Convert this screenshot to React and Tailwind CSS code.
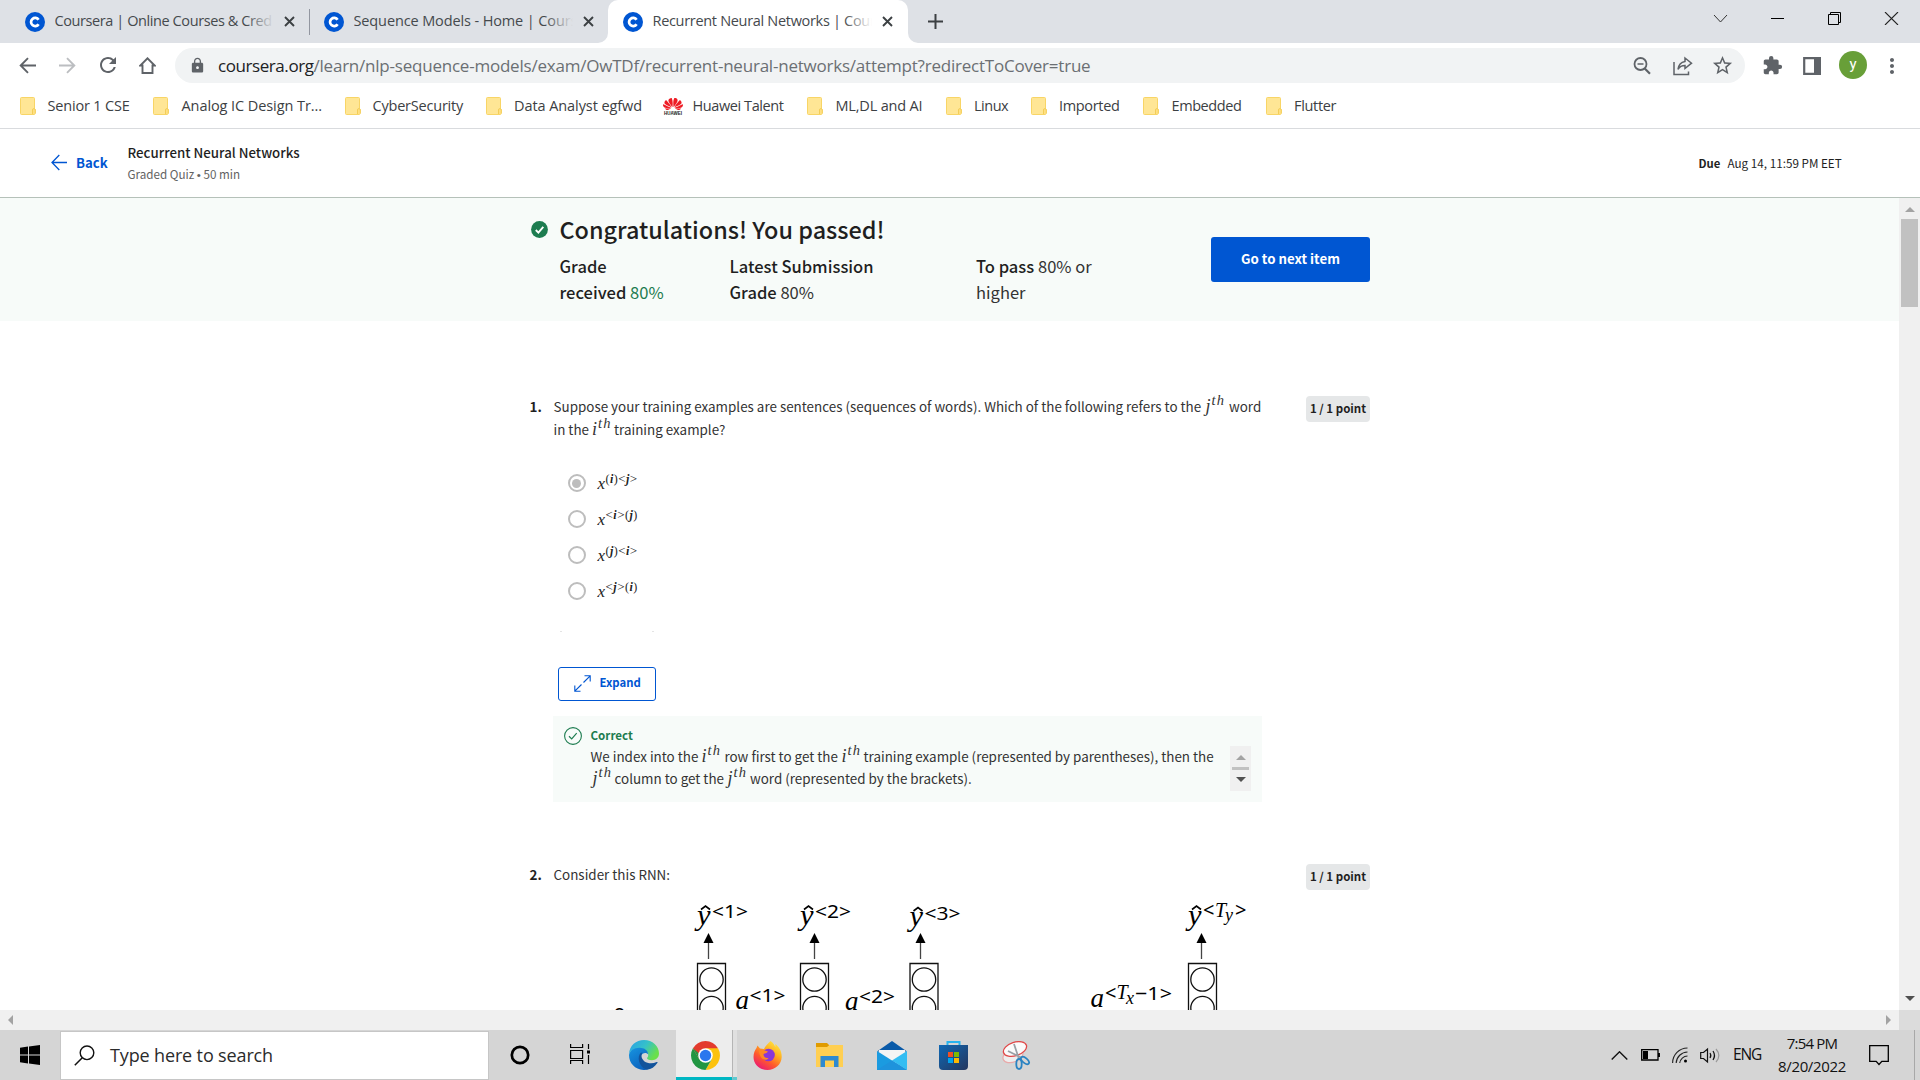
import { MdExtension, MdLock, MdMoreVert, MdRefresh, MdStarOutline } from "react-icons/md";
import { SiHuawei } from "react-icons/si";

function Favicon() {
  return (
    <svg className="size-5 shrink-0" viewBox="0 0 20 20">
      <circle cx="10" cy="10" r="10" fill="#0056d2" />
      <path d="M13.6 12.2a4.1 4.1 0 1 1 0-4.4" fill="none" stroke="#fff" strokeWidth="2.7" />
    </svg>
  );
}

function TabClose() {
  return (
    <svg className="size-[11px] shrink-0" viewBox="0 0 11 11">
      <path d="M1 1l9 9M10 1l-9 9" stroke="#3c4043" strokeWidth="1.9" />
    </svg>
  );
}

function TabBody({ title, fade, tracking }) {
  return (
    <>
      <Favicon />
      <div className="relative mr-[10px] mb-[2px] ml-[9.5px] w-[219px] overflow-hidden">
        <span className={"block whitespace-nowrap text-[14.5px] leading-5 text-[#45494d] " + tracking}>{title}</span>
        <span className={"absolute inset-y-0 right-0 w-7 bg-linear-to-r from-transparent " + fade} />
      </div>
      <TabClose />
    </>
  );
}

function TabStrip() {
  return (
    <div className="flex h-[43px] items-center bg-[#dee1e6]">
      <div className="flex h-full w-[309px] items-center pl-[25px]">
        <TabBody title="Coursera | Online Courses & Cred" fade="to-[#dee1e6]" tracking="tracking-[-0.41px]" />
      </div>
      <div className="h-[26px] w-px bg-[#9296a0]" />
      <div className="flex h-full w-[298px] items-center pl-[14px]">
        <TabBody title="Sequence Models - Home | Cours" fade="to-[#dee1e6]" tracking="tracking-[-0.12px]" />
      </div>
      <div className="relative flex h-full w-[299.5px] items-center rounded-t-[10px] bg-white pl-[15px]">
        <TabBody title="Recurrent Neural Networks | Cour" fade="to-white" tracking="tracking-[-0.31px]" />
        <svg className="absolute bottom-0 -left-[10px] size-[10px]" viewBox="0 0 10 10"><path d="M10 0v10H0A10 10 0 0 0 10 0z" fill="#fff" /></svg>
        <svg className="absolute bottom-0 -right-[10px] size-[10px]" viewBox="0 0 10 10"><path d="M0 0v10h10A10 10 0 0 1 0 0z" fill="#fff" /></svg>
      </div>
      <svg className="ml-5 size-[15px]" viewBox="0 0 15 15"><path d="M7.5 0v15M0 7.5h15" stroke="#3c4043" strokeWidth="2" /></svg>
      <div className="ml-auto flex items-start gap-[42px] self-start pt-3 pr-[21px]">
        <svg className="mt-[2px] h-[9px] w-[15px]" viewBox="0 0 15 9"><path d="M1 1l6.5 7L14 1" fill="none" stroke="#333" strokeWidth="1" /></svg>
        <svg className="h-[13px] w-[15px]" viewBox="0 0 15 13"><path d="M1 6.5h13" stroke="#000" strokeWidth="1" /></svg>
        <svg className="h-[13px] w-[15px]" viewBox="0 0 15 13"><path d="M1.5 2.500h10v10h-10zM3.5 2.500V.5h10v10h-2" fill="none" stroke="#000" strokeWidth="1" /></svg>
        <svg className="h-[13px] w-[15px]" viewBox="0 0 15 13"><path d="M1 0l13 13M14 0L1 13" stroke="#222" strokeWidth="1.1" /></svg>
      </div>
    </div>
  );
}

function AddressBar() {
  return (
    <div className="flex h-[45px] items-start pt-[5px]">
      <div className="flex h-[34px] w-[175px] items-center pl-[19px]">
        <svg className="size-[17px]" viewBox="0 0 17 17"><path d="M17 8.500H2M9 1.200L1.700 8.500 9 15.800" fill="none" stroke="#5f6368" strokeWidth="1.9" /></svg>
        <svg className="ml-[23px] size-[17px]" viewBox="0 0 17 17"><path d="M0 8.500h15M8 1.200l7.300 7.300L8 15.800" fill="none" stroke="#bcbec1" strokeWidth="1.9" /></svg>
        <MdRefresh className="ml-5 size-[24px] text-[#5f6368]" />
        <svg className="ml-[19px] h-[17px] w-[17px]" viewBox="0 0 17 17"><path d="M3.500 16V8.500H1.300L8.500 1.300l7.200 7.200h-2.200V16z" fill="none" stroke="#5f6368" strokeWidth="1.9" /></svg>
      </div>
      <div className="flex h-[35px] w-[1570px] items-center rounded-full bg-[#f1f3f4] pl-[14px] text-[#6b6f73]">
        <MdLock className="size-[17px] text-[#5f6368]" />
        <span className="ml-3 w-[1100px] whitespace-nowrap text-[17px] leading-6 tracking-[-0.22px]">
          <span className="tracking-[-0.43px] text-[#202124]">coursera.org</span>/learn/nlp-sequence-models/exam/OwTDf/recurrent-neural-networks/attempt?redirectToCover=true
        </span>
        <svg className="ml-auto size-[18px]" viewBox="0 0 18 18"><circle cx="7.5" cy="7" r="6" fill="none" stroke="#5f6368" strokeWidth="1.8" /><path d="M4.500 7h6" stroke="#5f6368" strokeWidth="1.5" /><path d="M11.700 11.500l5.300 5.300" stroke="#5f6368" strokeWidth="2.2" /></svg>
        <svg className="ml-[22px] size-[20px]" viewBox="0 0 20 20"><path d="M1 6v12.500h14.500V15.500M12 2l6.500 5.200L12 12.500V9.500c-3.500 0-5.500 1.300-7 3.800.5-4 3-7 7-7.800z" fill="none" stroke="#5f6368" strokeWidth="1.5" /></svg>
        <MdStarOutline className="mr-[11px] ml-[18px] size-[23px] text-[#5f6368]" />
      </div>
      <div className="flex h-[35px] items-center">
        <MdExtension className="ml-[17px] size-[21px] text-[#5f6368]" />
        <svg className="ml-[20px] h-[18px] w-[18px]" viewBox="0 0 18 18"><path d="M1.200 1.200h15.600v15.600H1.200z" fill="none" stroke="#5f6368" strokeWidth="2.2" /><path d="M11 0h7v18h-7z" fill="#5f6368" /></svg>
        <span className="mb-px ml-[18px] flex size-7 items-center justify-center rounded-full bg-[#689f38] pb-[2px] font-['Roboto',sans-serif] text-[15px] leading-none text-white">y</span>
        <MdMoreVert className="ml-[13px] size-[24px] text-[#5f6368]" />
      </div>
    </div>
  );
}

function Folder() {
  return (
    <svg className="h-[18px] w-4 shrink-0" viewBox="0 0 16 18">
      <path d="M1.500.5h12a1 1 0 0 1 1 1V12h.5v4.500a1 1 0 0 1-1 1H1.500a1 1 0 0 1-1-1v-15a1 1 0 0 1 1-1z" fill="#ffe695" stroke="#f8d566" />
      <path d="M12.500 17v-4a1.400 1.400 0 0 1 2.800 0v3.500" fill="#ffe082" stroke="#f3cd57" />
    </svg>
  );
}

function Huawei() {
  return (
    <span className="flex w-5 shrink-0 flex-col items-center">
      <SiHuawei className="h-[16px] w-5 text-[#ee1c25]" preserveAspectRatio="none" />
      <span className="font-['Liberation_Sans',sans-serif] text-[4.5px] leading-[4px] font-bold text-[#222]">HUAWEI</span>
    </span>
  );
}

const bookmarks = [
  ["Senior 1 CSE", "w-[133px]", "tracking-[-0.17px]", "gap-[11.5px]"],
  ["Analog IC Design Tr...", "w-[192px]", "tracking-[-0.08px]", "gap-[12.5px]"],
  ["CyberSecurity", "w-[141px]", "tracking-[-0.21px]", "gap-[11.5px]"],
  ["Data Analyst egfwd", "w-[177px]", "tracking-[-0.08px]", "gap-[12px]"],
  ["Huawei Talent", "w-[144px]", "tracking-[-0.41px]", "gap-[9.5px]"],
  ["ML,DL and AI", "w-[139px]", "tracking-[-0.17px]", "gap-[12.5px]"],
  ["Linux", "w-[85px]", "tracking-[-0.48px]", "gap-[12px]"],
  ["Imported", "w-[112px]", "tracking-[-0.33px]", "gap-[12px]"],
  ["Embedded", "w-[123px]", "tracking-[-0.41px]", "gap-[12.5px]"],
  ["Flutter", "w-[90px]", "tracking-[-0.33px]", "gap-[12px]"],
];

function Bookmarks() {
  return (
    <div className="flex h-[41px] border-b border-[#d9dbde] pb-[5px] pl-5">
      {bookmarks.map(([name, width, tracking, gap]) => (
        <div key={name} className={"flex items-center " + width + " " + gap}>
          {name === "Huawei Talent" ? <Huawei /> : <Folder />}
          <span className={"whitespace-nowrap text-[14.5px] leading-5 text-[#3c4043] " + tracking}>{name}</span>
        </div>
      ))}
    </div>
  );
}

function QuizHeader() {
  return (
    <header className="flex h-[69px] items-start border-b border-[#b5c1b9] bg-white pl-[51px]">
      <svg className="mt-[25px] h-[17px] w-[16px]" viewBox="0 0 16 17"><path d="M16 8.500H1M8.300 1L1 8.500 8.300 16" fill="none" stroke="#0056d2" strokeWidth="1.3" /></svg>
      <span className="mt-[24px] ml-[9px] w-[51.5px] text-[13.2px] leading-5 font-bold text-[#0056d2]">Back</span>
      <div className="pt-[14px]">
        <div className="text-[13.3px] leading-[20px] font-medium whitespace-nowrap text-[#1f1f1f]">Recurrent Neural Networks</div>
        <div className="text-[11.65px] leading-[21px] whitespace-nowrap text-[#636363]">Graded Quiz <span className="font-['Liberation_Sans',sans-serif]">•</span> 50 min</div>
      </div>
      <div className="mt-[24px] ml-auto flex w-[221.5px] text-[11.3px] leading-5 whitespace-nowrap text-[#1f1f1f]">
        <span className="w-[29px] font-bold">Due</span>
        <span className="text-[11.7px]">Aug 14, 11:59 PM EET</span>
      </div>
    </header>
  );
}

function Banner() {
  return (
    <section className="flex h-[123px] items-start bg-[#f7fbf9] pl-[530.5px] text-[#1f1f1f]">
      <svg className="mt-[23px] size-[17px]" viewBox="0 0 17 17"><circle cx="8.5" cy="8.5" r="8.4" fill="#1d7c50" /><path d="M4.800 9l2.600 2.600 4.900-5.700" fill="none" stroke="#fff" strokeWidth="1.9" /></svg>
      <div className="ml-3 w-[651.5px] pt-[15px]">
        <h1 className="text-[23.4px] leading-[32px] font-medium">Congratulations! You passed!</h1>
        <div className="mt-[8px] flex text-[16.55px] leading-[26px] whitespace-nowrap">
          <p className="w-[170px]"><b className="font-medium">Grade<br />received</b> <span className="text-[#1d7c50]">80%</span></p>
          <p className="w-[246.5px]"><b className="font-medium">Latest Submission<br />Grade</b> <span className="text-[#333]">80%</span></p>
          <p className="text-[#333]"><b className="font-medium text-[#1f1f1f]">To pass</b> 80% or<br />higher</p>
        </div>
      </div>
      <button className="mt-[39px] h-[45px] w-[159px] rounded-[3px] bg-[#0056d2] pb-[2px] text-[13.25px] leading-5 font-bold text-white">Go to next item</button>
    </section>
  );
}

function Badge() {
  return <span className="ml-auto flex h-[26px] w-16 items-center justify-center self-start rounded-[4px] bg-[#e5e7e8] pb-[2px] text-[11.5px] leading-5 font-bold whitespace-nowrap text-[#1f1f1f]">1 / 1 point</span>;
}

/* Inline ordinal such as i^th, set in an italic serif. */
function Nth({ v, w }) {
  return (
    <span className={"inline-block font-['Liberation_Serif',serif] text-[18px] leading-none italic " + w}>
      {v}<sup className="relative -top-[7px] ml-px align-baseline text-[14.5px] leading-none tracking-[1.2px]">th</sup>
    </span>
  );
}

const options = [["(i)<j>", true], ["<i>(j)", false], ["(j)<i>", false], ["<j>(i)", false]];

function Sup({ s }) {
  return [...s].map((c, i) => (
    <span key={i} className={c === "i" || c === "j" ? "font-bold italic" : c === "<" || c === ">" ? "text-[13px]" : ""}>{c}</span>
  ));
}

function Options() {
  return (
    <div className="mt-[24px]">
      {options.map(([s, on]) => (
        <div key={s} className="flex h-9 items-center pl-[38.5px]">
          <span className="flex size-[18px] items-center justify-center rounded-full border-2 border-[#bdbdbd]">
            {on && <span className="size-[9px] rounded-full bg-[#bdbdbd]" />}
          </span>
          <span className="mt-px ml-3 font-['Liberation_Serif',serif] text-[17px] leading-none whitespace-nowrap text-[#222]">
            <i>x</i><sup className="relative -top-[6px] ml-[0.5px] align-baseline text-[12px] leading-none tracking-[0.45px]"><Sup s={s} /></sup>
          </span>
        </div>
      ))}
    </div>
  );
}

function Feedback() {
  return (
    <div className="mt-[15px] ml-6 flex h-[86px] w-[709px] bg-[#f7fbf9] pt-[8px] pl-[11px]">
      <svg className="mt-[3px] size-[18px]" viewBox="0 0 18 18"><circle cx="9" cy="9" r="8.4" fill="none" stroke="#1d7c50" strokeWidth="1.1" /><path d="M5 9.300l2.700 2.600 5-5.700" fill="none" stroke="#1d7c50" strokeWidth="1.2" /></svg>
      <div className="ml-[8.5px] w-[639.5px] text-[13.42px] leading-[22px] whitespace-nowrap text-[#333]">
        <div className="h-[21px] text-[11.6px] font-bold text-[#1d7c50]">Correct</div>
        <div className="flex h-[22px] items-baseline">
          <span className="w-[111px]">We index into the</span><Nth v="i" w="w-[23px]" />
          <span className="w-[117px]">row first to get the</span><Nth v="i" w="w-[22px]" />
          <span>training example (represented by parentheses), then the</span>
        </div>
        <div className="flex h-[22px] items-baseline">
          <span className="w-[2px]" /><Nth v="j" w="w-[22px]" />
          <span className="w-[113px]">column to get the</span><Nth v="j" w="w-[22.5px]" />
          <span>word (represented by the brackets).</span>
        </div>
      </div>
      <div className="mt-[22px] flex h-[45px] w-[21px] flex-col items-center bg-[#f0f0f0] pt-[9px]">
        <svg className="h-[5px] w-[10px]" viewBox="0 0 10 5"><path d="M5 0l5 5H0z" fill="#a3a3a3" /></svg>
        <span className="mt-[7px] h-[3px] w-[17px] bg-[#c1c1c1]" />
        <svg className="mt-[7px] h-[5px] w-[10px]" viewBox="0 0 10 5"><path d="M0 0h10L5 5z" fill="#505050" /></svg>
      </div>
    </div>
  );
}

/* One time step: predicted output, arrow and the stack of hidden units. */
function Cell({ box, arrow, label, labelY, sup }) {
  return (
    <g>
      <text x={label} y={labelY} fontSize="29" fontStyle="italic" textLength="13.5" lengthAdjust="spacingAndGlyphs">y</text>
      <path d={`M${label + 4} ${labelY - 15}l4.500-3.500 4.500 3.500`} fill="none" stroke="#000" strokeWidth="1.6" />
      {sup && <text x={label + 15} y={labelY - 6.5} className="font-['Noto_Sans',sans-serif]" fontSize="18.5" textLength="36" lengthAdjust="spacingAndGlyphs">{sup}</text>}
      <path d={`M${arrow} 57v16`} stroke="#444" strokeWidth="1.3" />
      <path d={`M${arrow} 47l5 10h-10z`} />
      <g fill="none" stroke="#111" strokeWidth="1.3">
        <path d={`M${box} 126V77.500h28V126`} />
        <circle cx={box + 14} cy="93.5" r="11.7" />
        <circle cx={box + 14} cy="122" r="11.7" />
      </g>
    </g>
  );
}

function Rnn() {
  const sans = "font-['Noto_Sans',sans-serif]";
  return (
    <svg className="block h-[124px] w-[720px] font-['Liberation_Serif',serif]" viewBox="0 0 720 124" fill="#000">
      <Cell box={143.5} arrow={154.5} label={143} labelY={38.5} sup="&lt;1&gt;" />
      <Cell box={246.5} arrow={260.5} label={246} labelY={38.5} sup="&lt;2&gt;" />
      <Cell box={356} arrow={366.5} label={355.5} labelY={40} sup="&lt;3&gt;" />
      <Cell box={634.5} arrow={647.5} label={634} labelY={38.5} />
      <text x="649" y="31" className={sans} fontSize="20">&lt;</text>
      <text x="661" y="30.5" fontSize="20" fontStyle="italic">T</text>
      <text x="671" y="35" fontSize="18" fontStyle="italic">y</text>
      <text x="681" y="31" className={sans} fontSize="20">&gt;</text>
      <text x="181.5" y="122.5" fontSize="27" fontStyle="italic">a</text>
      <text x="195.5" y="115.5" className={sans} fontSize="18.5" textLength="36" lengthAdjust="spacingAndGlyphs">&lt;1&gt;</text>
      <text x="291" y="124" fontSize="27" fontStyle="italic">a</text>
      <text x="305" y="117" className={sans} fontSize="18.5" textLength="36" lengthAdjust="spacingAndGlyphs">&lt;2&gt;</text>
      <text x="536.5" y="120.5" fontSize="27" fontStyle="italic">a</text>
      <text x="551" y="113.5" className={sans} fontSize="20">&lt;</text>
      <text x="562.5" y="113" fontSize="20" fontStyle="italic">T</text>
      <text x="572" y="118" fontSize="18" fontStyle="italic">x</text>
      <text x="581" y="113.5" className={sans} fontSize="18.5" textLength="37" lengthAdjust="spacingAndGlyphs">−1&gt;</text>
      <text x="47.5" y="135" className={sans} fontSize="18.5" textLength="36" lengthAdjust="spacingAndGlyphs">&lt;0&gt;</text>
    </svg>
  );
}

function Quiz() {
  return (
    <div className="w-[841px] text-[13.42px] leading-[23px] text-[#333]">
      <div className="mt-[74px] flex">
        <b className="w-[24.5px] pl-[0.5px] font-bold text-[#1f1f1f]">1.</b>
        <div className="whitespace-nowrap">
          <div className="flex h-[23px] items-baseline"><span className="w-[652px]">Suppose your training examples are sentences (sequences of words). Which of the following refers to the</span><Nth v="j" w="w-[23.5px]" /><span>word</span></div>
          <div className="flex h-[23px] items-baseline"><span className="w-[38.5px]">in the</span><Nth v="i" w="w-[22px]" /><span>training example?</span></div>
        </div>
        <span className="mt-px ml-auto flex"><Badge /></span>
      </div>
      <Options />
      <div className="mt-[22px] ml-[31px] flex h-px w-[94px] justify-between"><span className="w-[2px] bg-[#e4e4e4]" /><span className="w-[2px] bg-[#e4e4e4]" /></div>
      <button className="mt-[35px] ml-[29px] flex h-[34px] w-[98px] items-center rounded-[3px] border border-[#0056d2] pl-[15px]">
        <svg className="mb-px size-[17px]" viewBox="0 0 17 17"><path d="M10.500.8h5.700v5.700M16.200.8L9.500 7.500M6.500 16.200H.8v-5.700M.8 16.200l6.700-6.700" fill="none" stroke="#0056d2" strokeWidth="1.1" /></svg>
        <span className="mb-[4px] ml-[8.5px] text-[11.35px] leading-5 font-bold text-[#0056d2]">Expand</span>
      </button>
      <Feedback />
      <div className="mt-[61px] flex h-[23px]">
        <b className="w-[24.5px] pl-[0.5px] font-bold text-[#1f1f1f]">2.</b><span>Consider this RNN:</span>
        <span className="mt-px ml-auto flex"><Badge /></span>
      </div>
      <div className="pl-[25px]"><Rnn /></div>
    </div>
  );
}

function Search() {
  return (
    <div className="flex h-[49px] w-[429px] items-center border border-[#c6c6c6] bg-white pl-[13px]">
      <svg className="size-[21px]" viewBox="0 0 21 21"><circle cx="13" cy="7.8" r="6.8" fill="none" stroke="#111" strokeWidth="1.4" /><path d="M8.300 12.700L.8 20.200" stroke="#111" strokeWidth="1.5" /></svg>
      <span className="ml-[15px] text-[18px] leading-6 tracking-[-0.14px] text-[#2b2b2b]">Type here to search</span>
    </div>
  );
}

function Edge() {
  return (
    <svg className="size-[30px]" viewBox="0 0 30 30">
      <defs>
        <linearGradient id="e1" x1="0" y1="0" x2="1" y2=".5"><stop offset="0" stopColor="#2a9fe8" /><stop offset=".55" stopColor="#35c1c9" /><stop offset="1" stopColor="#6ae04a" /></linearGradient>
        <linearGradient id="e2" x1="0" y1="0" x2=".6" y2="1"><stop offset="0" stopColor="#1794e0" /><stop offset="1" stopColor="#0b62bd" /></linearGradient>
      </defs>
      <path d="M0 14C.5 5.500 7 0 15 0c8.500 0 15 6 15 13.500 0 4.500-3.500 6.700-7 6.700-3.500 0-5.200-1-5-2.200 1-1 1.200-2 1.200-3.200C19 11.500 15.500 8.500 11 8.500 5.500 8.500 1 11 0 14z" fill="url(#e1)" />
      <path d="M0 15c.5-4 5-7.200 10.500-7.200 5 0 8.600 2.800 8.700 6.700-1.700-2.500-6-2-7.500 2C10 22 14 28.500 20 29c-2 .8-4 1-5.500 1C6 29.500 0 23 0 15z" fill="url(#e2)" />
      <path d="M11.500 13C8 17 9.500 26 17 29.500c4.500.5 8.500-2 11.500-6.700.3-.6-.2-1-.8-.7C21 25 13 22.500 12.500 16c0-1.500.2-2.500 1-3.500z" fill="#12539b" />
    </svg>
  );
}

function Chrome() {
  return (
    <svg className="size-[29px]" viewBox="-14 -14 28 28">
      <path d="M0 0L-12.120-7A14 14 0 0 1 12.120-7z" fill="#e33b2e" />
      <path d="M0-7H12.120A14 14 0 0 1 0 14L6 3.500z" fill="#fcc20f" />
      <path d="M-12.120-7A14 14 0 0 0 0 14L6 3.500-6 3.500z" fill="#229642" />
      <path d="M-12.120-7L-6 3.500 0-7z" fill="#e33b2e" />
      <path d="M-12.120-7L-6 3.500-4 0z" fill="#229642" />
      <circle r="7" fill="#fff" /><circle r="5.5" fill="#2a77ee" />
    </svg>
  );
}

function Firefox() {
  return (
    <svg className="size-[29px]" viewBox="0 0 29 29">
      <defs><linearGradient id="f1" x1=".85" y1="0" x2=".2" y2="1"><stop offset="0" stopColor="#fff04a" /><stop offset=".35" stopColor="#ffb020" /><stop offset=".65" stopColor="#ff5a2c" /><stop offset="1" stopColor="#e8127c" /></linearGradient></defs>
      <path d="M17.500 0c3 2 4 4 4.700 6 .3-1 .3-2 0-3 3 2 6.500 6 6.500 13C28.500 23.500 22 29 14.500 29S.5 23.500.5 16c0-4 1.500-7 3-9l1-2.500L7 7.500c1.500 0 2.500.2 4 .5C12 5 15 3 17.500 0z" fill="url(#f1)" />
      <circle cx="15.5" cy="14" r="6.3" fill="#8a35d8" />
      <path d="M6 9.500c3-2 6 .5 9 1-1 1.800-3 1.800-4.500 2.500 0 3 2 4.500 5 4-1.500 3.500-9 2.500-9.500-7.500z" fill="#ff8a22" />
    </svg>
  );
}

function Explorer() {
  return (
    <svg className="h-6 w-[27px]" viewBox="0 0 27 24">
      <path d="M0 0h11l2 2v3H0z" fill="#e09b00" /><path d="M0 4h11l2.500-2H27v22H0z" fill="#ffcf52" />
      <path d="M4.500 24V13h18v11h-4.500v-6.500H9V24z" fill="#2f8ad0" />
    </svg>
  );
}

function Mail() {
  return (
    <svg className="h-[29px] w-[30px]" viewBox="0 0 30 29">
      <path d="M0 10.500L15 0l15 10.500z" fill="#0a5aa8" /><path d="M2 9h26v13H2z" fill="#f4f4f4" />
      <path d="M0 10l30 19H0z" fill="#1b9be0" /><path d="M30 10v19L15 19.500z" fill="#33bdf2" /><path d="M0 29l15-9.500L30 29z" fill="#1e93dc" />
    </svg>
  );
}

function Store() {
  return (
    <svg className="-ml-[2px] h-[29px] w-[29px]" viewBox="0 0 29 29">
      <defs><linearGradient id="s1" x1="0" y1="0" x2="1" y2="1"><stop offset="0" stopColor="#0f68b4" /><stop offset="1" stopColor="#24365e" /></linearGradient></defs>
      <path d="M8.500 6V1h12v5" fill="none" stroke="#27b3ee" strokeWidth="2" />
      <path d="M0 4h29v21a4 4 0 0 1-4 4H4a4 4 0 0 1-4-4z" fill="url(#s1)" />
      <path d="M9 11h5v5H9z" fill="#f25022" /><path d="M15 11h5v5h-5z" fill="#7fba00" /><path d="M9 17h5v5H9z" fill="#00a4ef" /><path d="M15 17h5v5h-5z" fill="#ffb900" />
    </svg>
  );
}

function Snip() {
  return (
    <svg className="size-[29px]" viewBox="0 0 29 29" fill="none">
      <ellipse cx="11" cy="14.5" rx="10.5" ry="6.5" transform="rotate(-22 11 14.5)" stroke="#e9a9a9" strokeWidth="1.2" fill="#eee" />
      <ellipse cx="13" cy="8" rx="12" ry="6.7" transform="rotate(-18 13 8)" stroke="#e04848" strokeWidth="1.3" fill="#fbfbfb" />
      <path d="M12 3l5 15M6 10l14 7" stroke="#9aa0a6" strokeWidth="1.8" />
      <ellipse cx="17" cy="23" rx="2.7" ry="5" stroke="#2a83c2" strokeWidth="1.8" /><ellipse cx="23" cy="19.5" rx="2.5" ry="4.8" transform="rotate(-50 23 19.500)" stroke="#2a83c2" strokeWidth="1.8" />
    </svg>
  );
}

function Tray() {
  return (
    <div className="ml-auto flex h-full items-center text-[15px] leading-[23px] text-[#111]">
      <svg className="h-[9px] w-[17px]" viewBox="0 0 17 9"><path d="M.7 8.500l7.800-7.700 7.800 7.700" fill="none" stroke="#111" strokeWidth="1.4" /></svg>
      <svg className="ml-[13px] h-[12px] w-[19px]" viewBox="0 0 19 12"><path d="M.7.700h16.300v10.300H.7zM18.300 4v4" fill="none" stroke="#000" strokeWidth="1.3" /><path d="M2 2h5v8H2z" /></svg>
      <svg className="ml-3 size-[16px]" viewBox="0 0 16 16" fill="none" stroke="#222" strokeWidth="1.1"><path d="M.6 16A15 15 0 0 1 15.500 1M4.200 16A11.500 11.500 0 0 1 15.500 5M7.700 16A8 8 0 0 1 15.500 9" /><circle cx="13.5" cy="14" r="1.5" fill="#000" stroke="none" /></svg>
      <svg className="ml-[12px] h-[17px] w-[20px]" viewBox="0 0 20 17" fill="none" stroke="#111" strokeWidth="1.2"><path d="M.7 5.500h2.800l4-3.500v13l-4-3.500H.7zM10 6c1 1.500 1 3.500 0 5M13 4c2 3 2 6 0 9" /><path d="M16 2c3.500 4 3.500 9 0 13" stroke="#999" /></svg>
      <span className="mb-px ml-[13px] w-[45px] text-[15.5px] tracking-[-1.1px]">ENG</span>
      <div className="mb-px flex w-[68px] flex-col items-center">
        <span className="tracking-[-0.8px]">7:54 PM</span><span className="whitespace-nowrap tracking-[-0.34px]">8/20/2022</span>
      </div>
      <svg className="ml-[23px] h-[21px] w-5" viewBox="0 0 20 21"><path d="M.7.700h18.600v15.600h-6.500L10 19.500l-2.800-3.200H.7z" fill="none" stroke="#000" strokeWidth="1.3" /></svg>
      <span className="mr-[5px] ml-[25px] h-full w-px bg-[#a8a8a8]" />
    </div>
  );
}

function Taskbar() {
  return (
    <div className="flex h-[50px] items-center bg-[#d5d5d5]">
      <svg className="mr-5 ml-5 size-5" viewBox="0 0 20 20"><path d="M0 2.700l8-1.100v7.900H0zM9 1.400L20 0v9.500H9zM0 10.500h8v7.900l-8-1.100zM9 10.500h11V20l-11-1.500z" /></svg>
      <Search />
      <svg className="ml-[21px] size-[20px]" viewBox="0 0 20 20"><circle cx="10" cy="10" r="8.2" fill="none" stroke="#000" strokeWidth="2.7" /></svg>
      <svg className="mb-[2px] ml-[40px] h-[20px] w-[20px]" viewBox="0 0 20 20" fill="none" stroke="#000" strokeWidth="1.2"><path d="M.6 0v3.500h12V0M.6 6.500h12v8H.6zM.6 20v-3.500h12V20M18.500 0v5M18.500 11v9" /><path d="M17 6.500h3v3h-3z" fill="#000" stroke="none" /></svg>
      <div className="ml-[39px] w-[47px]"><Edge /></div>
      <div className="flex h-[50px] w-[56px] items-center justify-center border-b-[3px] border-[#00b7c3] bg-[#ededed] pt-[3px] pl-[3px]"><Chrome /></div>
      <div className="h-[50px] w-[5px] border-b-[3px] border-l border-b-[#5fc9d0] border-l-[#b5b5b5] bg-[#e0e0e0]" />
      <div className="ml-4 flex items-center gap-[34px]"><Firefox /><Explorer /><Mail /><Store /><Snip /></div>
      <Tray />
    </div>
  );
}

export default function App() {
  return (
    <div className="flex h-[1080px] w-[1920px] flex-col overflow-hidden bg-white font-['Open_Sans','Noto_Sans',sans-serif]">
      <TabStrip />
      <AddressBar />
      <Bookmarks />
      <div className="font-['Noto_Sans_CJK_SC',sans-serif]"><QuizHeader /></div>
      <div className="flex h-[812px]">
        <main className="h-[812px] w-[1857px] grow overflow-hidden font-['Noto_Sans_CJK_SC',sans-serif]">
          <Banner />
          <div className="pl-[529px]"><Quiz /></div>
        </main>
        <div className="flex w-[21px] shrink-0 flex-col items-center bg-[#f0f0f0] pt-[9px]">
          <svg className="h-[5px] w-[10px]" viewBox="0 0 10 5"><path d="M5 0l5 5H0z" fill="#a3a3a3" /></svg>
          <span className="mt-[7px] h-[88px] w-[17px] bg-[#c1c1c1]" />
          <svg className="mt-auto mb-[9px] h-[5px] w-[10px]" viewBox="0 0 10 5"><path d="M0 0h10L5 5z" fill="#505050" /></svg>
        </div>
      </div>
      <div className="flex h-5 items-center bg-[#f0f0f0] pl-2">
        <svg className="h-[10px] w-[5px]" viewBox="0 0 5 10"><path d="M5 0v10L0 5z" fill="#a3a3a3" /></svg>
        <svg className="mr-2 ml-auto h-[10px] w-[5px]" viewBox="0 0 5 10"><path d="M0 0v10l5-5z" fill="#a3a3a3" /></svg>
        <span className="h-5 w-[21px] bg-[#dcdcdc]" />
      </div>
      <Taskbar />
    </div>
  );
}
